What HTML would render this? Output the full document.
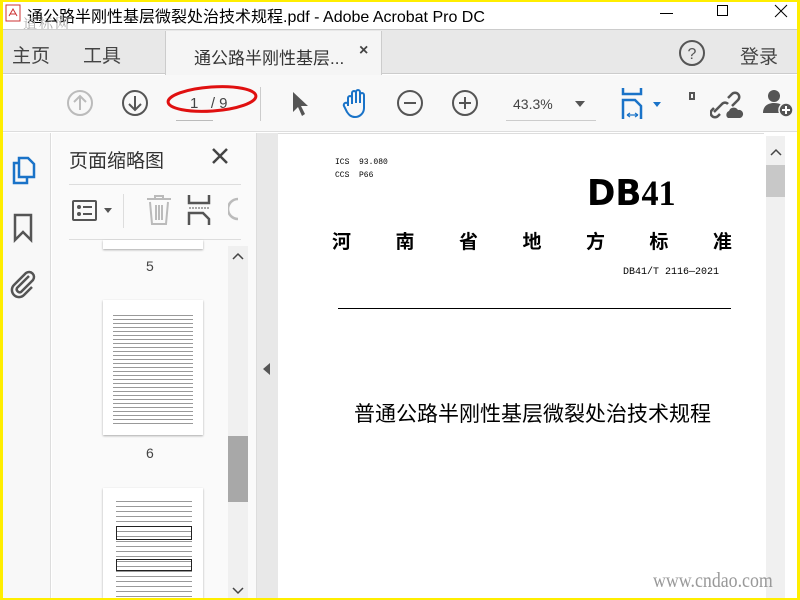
<!DOCTYPE html>
<html><head><meta charset="utf-8"><style>
*{margin:0;padding:0;box-sizing:border-box}
body{width:800px;height:600px;overflow:hidden;background:#ffee00;font-family:"Liberation Sans","Noto Sans CJK SC",sans-serif;position:relative}
.a{position:absolute}
#win{left:3px;top:2px;width:794px;height:596px;background:#fff;overflow:hidden}
</style></head><body>
<div id="win" class="a">
<div class="a" style="left:0;top:0;width:794px;height:27px;background:#fff"></div>
<svg class="a" style="left:2px;top:2px" width="18" height="18"><rect x="1" y="1" width="14" height="16" fill="#fff" stroke="#c33"/><path d="M4 12 L8 5 L12 12 M5 10 H11" stroke="#c33" fill="none"/></svg>
<div class="a" style="left:24px;top:1px;font-size:16px;color:#000;white-space:nowrap">通公路半刚性基层微裂处治技术规程.pdf - Adobe Acrobat Pro DC</div>
<div class="a" style="left:20px;top:12px;font-size:14px;color:#aaa;font-family:'Noto Serif CJK SC',serif;letter-spacing:2px">道标网</div>
<div class="a" style="left:657px;top:11px;width:13px;height:1px;background:#000"></div>
<div class="a" style="left:714px;top:3px;width:11px;height:11px;border:1px solid #000"></div>
<svg class="a" style="left:771px;top:2px" width="14" height="14"><path d="M1 1L13 13M13 1L1 13" stroke="#000"/></svg>
<div class="a" style="left:0;top:27px;width:794px;height:45px;background:#e8e8e8;border-top:1px solid #ccc;border-bottom:1px solid #ccc"></div>
<div class="a" style="left:162px;top:29px;width:217px;height:44px;background:#f5f5f5;border-left:1px solid #ccc;border-right:1px solid #ccc"></div>
<div class="a" style="left:9px;top:39px;font-size:19px;color:#444">主页</div>
<div class="a" style="left:80px;top:39px;font-size:19px;color:#444">工具</div>
<div class="a" style="left:191px;top:42px;font-size:17px;color:#333">通公路半刚性基层...</div>
<div class="a" style="left:356px;top:40px;font-size:16px;color:#444;font-weight:bold">×</div>
<svg class="a" style="left:675px;top:37px" width="28" height="28"><circle cx="14" cy="14" r="12" fill="none" stroke="#555" stroke-width="2"/><text x="14" y="20" font-size="16" text-anchor="middle" fill="#555" font-family="Liberation Sans">?</text></svg>
<div class="a" style="left:737px;top:40px;font-size:19px;color:#444">登录</div>
<div class="a" style="left:0;top:73px;width:794px;height:57px;background:#f8f8f8;border-bottom:1px solid #ddd"></div>
<svg class="a" style="left:63px;top:87px" width="28" height="28"><circle cx="14" cy="14" r="12" fill="none" stroke="#bbb" stroke-width="2"/><path d="M14 21V7M8 13L14 7L20 13" stroke="#bbb" stroke-width="2" fill="none"/></svg>
<svg class="a" style="left:118px;top:87px" width="28" height="28"><circle cx="14" cy="14" r="12" fill="none" stroke="#555" stroke-width="2"/><path d="M14 7V21M8 15L14 21L20 15" stroke="#555" stroke-width="2" fill="none"/></svg>
<div class="a" style="left:173px;top:118px;width:37px;height:1px;background:#bbb"></div>
<div class="a" style="left:187px;top:93px;font-size:15px;color:#444">1 &nbsp;&nbsp;/ 9</div>
<svg class="a" style="left:163px;top:77px" width="96" height="40"><ellipse cx="46" cy="20" rx="44" ry="12" fill="none" stroke="#e01010" stroke-width="3" transform="rotate(-4 46 20)"/></svg>
<div class="a" style="left:257px;top:85px;width:1px;height:34px;background:#ccc"></div>
<svg class="a" style="left:287px;top:88px" width="20" height="28"><path d="M3 2L3 22L8 17L12 26L15 24L11 16L18 16Z" fill="#555"/></svg>
<svg class="a" style="left:337px;top:86px" width="32" height="32"><path d="M8 18V10a2 2 0 0 1 4 0V16V5a2 2 0 0 1 4 0V15V4a2 2 0 0 1 4 0V15V7a2 2 0 0 1 4 0V20c0 5-4 9-9 9c-4 0-6-2-8-5L4 18a2 2 0 0 1 4-2" fill="none" stroke="#1a73c8" stroke-width="2"/></svg>
<svg class="a" style="left:393px;top:87px" width="28" height="28"><circle cx="14" cy="14" r="12" fill="none" stroke="#555" stroke-width="2"/><path d="M8 14H20" stroke="#555" stroke-width="2"/></svg>
<svg class="a" style="left:448px;top:87px" width="28" height="28"><circle cx="14" cy="14" r="12" fill="none" stroke="#555" stroke-width="2"/><path d="M8 14H20M14 8V20" stroke="#555" stroke-width="2"/></svg>
<div class="a" style="left:510px;top:94px;font-size:14px;color:#444">43.3%</div>
<div class="a" style="left:503px;top:118px;width:90px;height:1px;background:#ccc"></div>
<svg class="a" style="left:572px;top:99px" width="10" height="6"><path d="M0 0H10L5 6Z" fill="#555"/></svg>
<svg class="a" style="left:618px;top:86px" width="42" height="32"><path d="M2 0V6H20V0M2 31V12H14L20 18V31" fill="none" stroke="#1a73c8" stroke-width="2.5"/><path d="M6 27H17M6 27l3-2M6 27l3 2M17 27l-3-2M17 27l-3 2" stroke="#1a73c8" stroke-width="1.2"/><path d="M32 14H40L36 19Z" fill="#1a73c8"/></svg>
<div class="a" style="left:686px;top:90px;width:6px;height:8px;border:2px solid #555"></div>
<svg class="a" style="left:707px;top:88px" width="34" height="30"><path d="M4 22l8-8a4 4 0 0 1 6 0M18 8l4-4a4 4 0 0 1 6 6l-6 6M10 24l-2 2a4 4 0 0 1-6-6l2-2" fill="none" stroke="#555" stroke-width="2.5"/><path d="M18 28a4 4 0 0 1 1-7a5 5 0 0 1 9-1a4 4 0 0 1 2 8Z" fill="#555"/></svg>
<svg class="a" style="left:760px;top:86px" width="34" height="32"><circle cx="11" cy="8" r="6" fill="#555"/><path d="M0 25c0-7 5-10 11-10s8 2 10 5v5Z" fill="#555"/><circle cx="23" cy="22" r="7" fill="#555" stroke="#f8f8f8" stroke-width="1.5"/><path d="M19 22H27M23 18V26" stroke="#fff" stroke-width="2"/></svg>
<div class="a" style="left:0;top:131px;width:48px;height:465px;background:#f8f8f8;border-right:1px solid #ddd"></div>
<svg class="a" style="left:7px;top:153px" width="26" height="30"><path d="M9 3H18L24 9V22H9Z" fill="none" stroke="#1a73c8" stroke-width="2.5"/><path d="M9 8H4V28H17V22" fill="none" stroke="#1a73c8" stroke-width="2.5"/></svg>
<svg class="a" style="left:10px;top:211px" width="20" height="30"><path d="M2 2H18V27L10 19L2 27Z" fill="none" stroke="#555" stroke-width="2.5"/></svg>
<svg class="a" style="left:6px;top:268px" width="28" height="30"><path d="M20 6L8 18a3 3 0 0 0 4 4L24 10a5 5 0 0 0-7-7L5 15a7 7 0 0 0 10 10l8-8" fill="none" stroke="#555" stroke-width="2.5"/></svg>
<div class="a" style="left:49px;top:131px;width:204px;height:465px;background:#fafafa"></div>
<div class="a" style="left:66px;top:144px;font-size:19px;color:#333">页面缩略图</div>
<svg class="a" style="left:208px;top:145px" width="18" height="18"><path d="M2 2L16 16M16 2L2 16" stroke="#444" stroke-width="2.5"/></svg>
<div class="a" style="left:66px;top:182px;width:172px;height:1px;background:#ddd"></div>
<div class="a" style="left:66px;top:237px;width:172px;height:1px;background:#ddd"></div>
<div class="a" style="left:69px;top:198px;width:25px;height:21px;border:2.5px solid #555;border-radius:2px"></div>
<div class="a" style="left:74px;top:203px;width:4px;height:4px;background:#555;border-radius:2px"></div>
<div class="a" style="left:74px;top:210px;width:4px;height:4px;background:#555;border-radius:2px"></div>
<div class="a" style="left:80px;top:204px;width:9px;height:2px;background:#555"></div>
<div class="a" style="left:80px;top:211px;width:9px;height:2px;background:#555"></div>
<svg class="a" style="left:101px;top:206px" width="10" height="6"><path d="M0 0H8L4 5Z" fill="#555"/></svg>
<div class="a" style="left:120px;top:192px;width:1px;height:34px;background:#ddd"></div>
<svg class="a" style="left:142px;top:192px" width="28" height="32"><path d="M2 5H26M10 5V2H18V5M5 8L7 30H21L23 8M11 11V26M14 11V26M17 11V26" fill="none" stroke="#bbb" stroke-width="2"/></svg>
<svg class="a" style="left:184px;top:193px" width="26" height="32"><path d="M2 0V8H22V0M2 30V18H16L22 24V30" fill="none" stroke="#555" stroke-width="2.5"/><path d="M2 13H22" stroke="#555" stroke-dasharray="2 1"/></svg>
<svg class="a" style="left:225px;top:194px" width="12" height="28"><path d="M10 3a10 10 0 0 0 0 20" fill="none" stroke="#bbb" stroke-width="2.5"/></svg>
<div class="a" style="left:100px;top:238px;width:100px;height:9px;background:#fff;box-shadow:0 1px 2px #aaa"></div>
<div class="a" style="left:143px;top:256px;font-size:14px;color:#444">5</div>
<div class="a" style="left:100px;top:298px;width:100px;height:135px;background:#fff;box-shadow:0 1px 2px #aaa"></div>
<div class="a" style="left:110px;top:310px;width:80px;height:115px;background:repeating-linear-gradient(#fff 0,#fff 3px,#999 3px,#999 4px)"></div>
<div class="a" style="left:143px;top:443px;font-size:14px;color:#444">6</div>
<div class="a" style="left:100px;top:486px;width:100px;height:110px;background:#fff;box-shadow:0 1px 2px #aaa"></div>
<div class="a" style="left:113px;top:495px;width:76px;height:100px;background:repeating-linear-gradient(#fff 0,#fff 4px,#999 4px,#999 5px)"></div>
<div class="a" style="left:113px;top:524px;width:76px;height:14px;border:1px solid #222"></div>
<div class="a" style="left:113px;top:557px;width:76px;height:12px;border:1px solid #222"></div>
<div class="a" style="left:225px;top:244px;width:20px;height:352px;background:#f0f0f0"></div>
<div class="a" style="left:225px;top:434px;width:20px;height:66px;background:#a8a8a8"></div>
<svg class="a" style="left:229px;top:250px" width="12" height="8"><path d="M1 7L6 2L11 7" fill="none" stroke="#444" stroke-width="1.5"/></svg>
<svg class="a" style="left:229px;top:585px" width="12" height="8"><path d="M1 1L6 6L11 1" fill="none" stroke="#444" stroke-width="1.5"/></svg>
<div class="a" style="left:253px;top:131px;width:22px;height:465px;background:#e8e8e8;border-left:1px solid #ddd"></div>
<svg class="a" style="left:260px;top:361px" width="8" height="12"><path d="M7 0V12L0 6Z" fill="#555"/></svg>
<div class="a" style="left:275px;top:131px;width:486px;height:465px;background:#fff;border-top:1px solid #ddd"></div>
<div class="a" style="left:332px;top:156px;font-size:8px;color:#000;font-family:'Liberation Mono',monospace">ICS &nbsp;93.080</div>
<div class="a" style="left:332px;top:169px;font-size:8px;color:#000;font-family:'Liberation Mono',monospace">CCS &nbsp;P66</div>
<div class="a" style="left:584px;top:175px;font-size:36px;font-weight:900;color:#000;line-height:32px;font-family:'DejaVu Sans';transform:scaleX(0.95);transform-origin:left">DB<span style="font-family:'Liberation Serif';font-weight:bold">41</span></div>
<div class="a" style="left:329px;top:225px;width:400px;font-size:19px;font-weight:bold;color:#000;display:flex;justify-content:space-between;font-family:'Noto Sans CJK SC',sans-serif"><span>河</span><span>南</span><span>省</span><span>地</span><span>方</span><span>标</span><span>准</span></div>
<div class="a" style="left:620px;top:265px;font-size:10px;color:#000;font-family:'Liberation Mono',monospace">DB41/T 2116—2021</div>
<div class="a" style="left:335px;top:306px;width:393px;height:1px;background:#000"></div>
<div class="a" style="left:351px;top:396px;font-size:21px;color:#000;font-family:'Noto Sans CJK SC',sans-serif;white-space:nowrap">普通公路半刚性基层微裂处治技术规程</div>
<div class="a" style="left:761px;top:131px;width:33px;height:465px;background:#fff"></div>
<div class="a" style="left:763px;top:134px;width:19px;height:462px;background:#f0f0f0"></div>
<div class="a" style="left:763px;top:163px;width:19px;height:32px;background:#c8c8c8"></div>
<svg class="a" style="left:767px;top:146px" width="12" height="8"><path d="M1 7L6 2L11 7" fill="none" stroke="#444" stroke-width="1.5"/></svg>
<div class="a" style="left:650px;top:566px;font-size:21px;color:#999;font-family:'Liberation Serif',serif;white-space:nowrap;transform:scaleX(0.85);transform-origin:left">www.cndao.com</div>
</div>
</body></html>
